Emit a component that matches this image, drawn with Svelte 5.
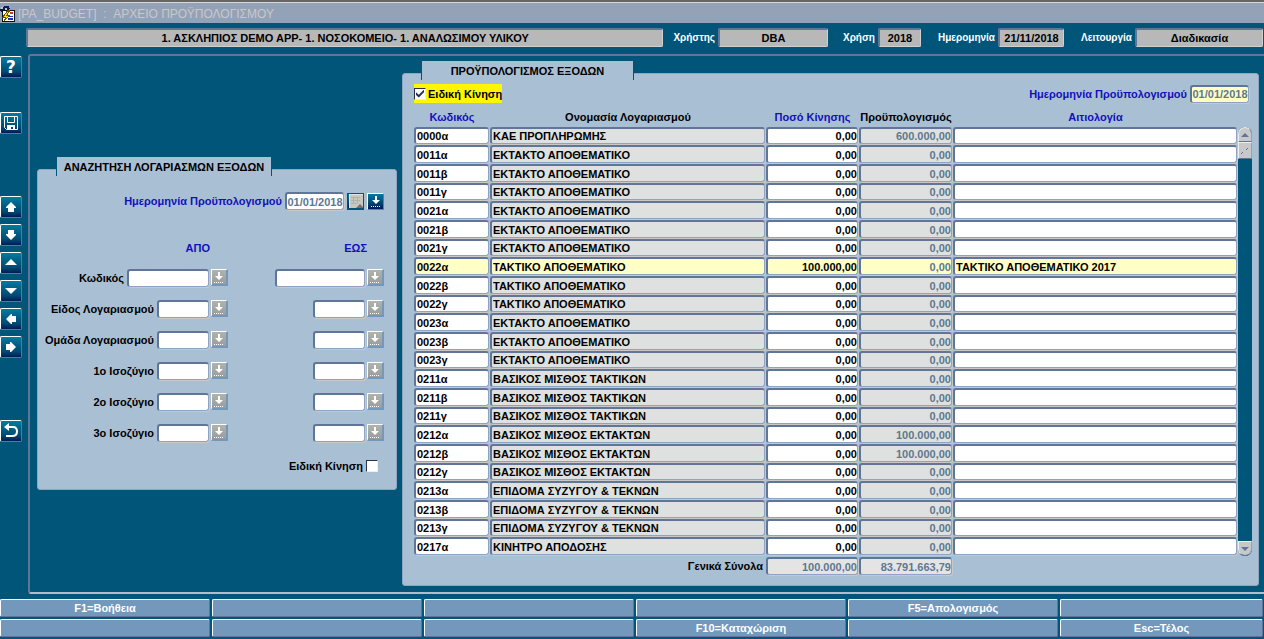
<script lang="ts">
	interface Row {
		code: string;
		name: string;
		amount: string;
		budget: string;
		reason: string;
	}

	function row(code: string, name: string, amount = "0,00", budget = "0,00", reason = ""): Row {
		return { code, name, amount, budget, reason };
	}

	let rows: Row[] = $state([
		row("0000α", "ΚΑΕ ΠΡΟΠΛΗΡΩΜΗΣ", "0,00", "600.000,00"),
		row("0011α", "ΕΚΤΑΚΤΟ ΑΠΟΘΕΜΑΤΙΚΟ"),
		row("0011β", "ΕΚΤΑΚΤΟ ΑΠΟΘΕΜΑΤΙΚΟ"),
		row("0011γ", "ΕΚΤΑΚΤΟ ΑΠΟΘΕΜΑΤΙΚΟ"),
		row("0021α", "ΕΚΤΑΚΤΟ ΑΠΟΘΕΜΑΤΙΚΟ"),
		row("0021β", "ΕΚΤΑΚΤΟ ΑΠΟΘΕΜΑΤΙΚΟ"),
		row("0021γ", "ΕΚΤΑΚΤΟ ΑΠΟΘΕΜΑΤΙΚΟ"),
		row("0022α", "ΤΑΚΤΙΚΟ ΑΠΟΘΕΜΑΤΙΚΟ", "100.000,00", "0,00", "ΤΑΚΤΙΚΟ ΑΠΟΘΕΜΑΤΙΚΟ 2017"),
		row("0022β", "ΤΑΚΤΙΚΟ ΑΠΟΘΕΜΑΤΙΚΟ"),
		row("0022γ", "ΤΑΚΤΙΚΟ ΑΠΟΘΕΜΑΤΙΚΟ"),
		row("0023α", "ΕΚΤΑΚΤΟ ΑΠΟΘΕΜΑΤΙΚΟ"),
		row("0023β", "ΕΚΤΑΚΤΟ ΑΠΟΘΕΜΑΤΙΚΟ"),
		row("0023γ", "ΕΚΤΑΚΤΟ ΑΠΟΘΕΜΑΤΙΚΟ"),
		row("0211α", "ΒΑΣΙΚΟΣ ΜΙΣΘΟΣ ΤΑΚΤΙΚΩΝ"),
		row("0211β", "ΒΑΣΙΚΟΣ ΜΙΣΘΟΣ ΤΑΚΤΙΚΩΝ"),
		row("0211γ", "ΒΑΣΙΚΟΣ ΜΙΣΘΟΣ ΤΑΚΤΙΚΩΝ"),
		row("0212α", "ΒΑΣΙΚΟΣ ΜΙΣΘΟΣ ΕΚΤΑΚΤΩΝ", "0,00", "100.000,00"),
		row("0212β", "ΒΑΣΙΚΟΣ ΜΙΣΘΟΣ ΕΚΤΑΚΤΩΝ", "0,00", "100.000,00"),
		row("0212γ", "ΒΑΣΙΚΟΣ ΜΙΣΘΟΣ ΕΚΤΑΚΤΩΝ"),
		row("0213α", "ΕΠΙΔΟΜΑ ΣΥΖΥΓΟΥ & ΤΕΚΝΩΝ"),
		row("0213β", "ΕΠΙΔΟΜΑ ΣΥΖΥΓΟΥ & ΤΕΚΝΩΝ"),
		row("0213γ", "ΕΠΙΔΟΜΑ ΣΥΖΥΓΟΥ & ΤΕΚΝΩΝ"),
		row("0217α", "ΚΙΝΗΤΡΟ ΑΠΟΔΟΣΗΣ"),
	]);

	let selected = $state("0022α");
	let special = $state(true);
	let searchSpecial = $state(false);

	const filters = [
		{ id: "code", label: "Κωδικός", wide: true },
		{ id: "kind", label: "Είδος Λογαριασμού", wide: false },
		{ id: "group", label: "Ομάδα Λογαριασμού", wide: false },
		{ id: "bal1", label: "1ο Ισοζύγιο", wide: false },
		{ id: "bal2", label: "2ο Ισοζύγιο", wide: false },
		{ id: "bal3", label: "3ο Ισοζύγιο", wide: false },
	];

	const tools = [
		{ id: "save", label: "Αποθήκευση", group: "near" },
		{ id: "up", label: "Προηγούμενο μπλοκ", group: "far" },
		{ id: "down", label: "Επόμενο μπλοκ", group: "" },
		{ id: "prev", label: "Προηγούμενη εγγραφή", group: "" },
		{ id: "next", label: "Επόμενη εγγραφή", group: "" },
		{ id: "left", label: "Προηγούμενο πεδίο", group: "" },
		{ id: "right", label: "Επόμενο πεδίο", group: "" },
		{ id: "back", label: "Επιστροφή", group: "far" },
	];

	const shapes: Record<string, string> = {
		up: "M8 3L13 8V9H11V13H5V9H3V8Z",
		down: "M8 13L13 8V7H11V3H5V7H3V8Z",
		prev: "M8 4L14 10H2Z",
		next: "M8 11L14 5H2Z",
		left: "M3 8L8 3H9V5H13V11H9V13H8Z",
		right: "M13 8L8 3H7V5H3V11H7V13H8Z",
	};

	const keys = [
		"F1=Βοήθεια", "", "", "", "F5=Απολογισμός", "",
		"", "", "", "F10=Καταχώριση", "", "Esc=Τέλος",
	];
</script>

{#snippet lov(label: string, disabled: boolean)}
	<button class="lov" aria-label={label} {disabled}>
		<svg viewBox="0 0 14 14" width="14" height="14">
			<path d="M6 2H8V6H11L7 10L3 6H6Z" fill="#fff" />
			<path d="M2 12.5H12" stroke="#fff" stroke-dasharray="1 1" />
		</svg>
	</button>
{/snippet}

<header class="titlebar">
	<svg class="app-icon" viewBox="0 0 16 16" width="16" height="16" shape-rendering="crispEdges">
		<path d="M0 3L3 1L5 0H9L10 3L8 4H3L1 6Z" fill="#111a55" />
		<path d="M1 1H3V3H1ZM5 2H7V4H5Z" fill="#b8c4dc" />
		<rect x="2" y="4" width="13" height="12" fill="#111" />
		<rect x="3" y="5" width="11" height="10" fill="#fff" />
		<path d="M8 4L3 11H6L4 15L10 9H7L10 4Z" fill="#ffe600" stroke="#665500" stroke-width="1" />
		<rect x="10" y="6" width="3" height="2" fill="#cc3322" />
		<path d="M9 10H13V11H9ZM8 12H13V14H8Z" fill="#2233bb" />
	</svg>
	<h1>[PA_BUDGET] &nbsp;: &nbsp;ΑΡΧΕΙΟ ΠΡΟΫΠΟΛΟΓΙΣΜΟΥ</h1>
</header>

<div class="status">
	<output class="info company">1. ΑΣΚΛΗΠΙΟΣ DEMO APP- 1. ΝΟΣΟΚΟΜΕΙΟ- 1. ΑΝΑΛΩΣΙΜΟΥ ΥΛΙΚΟΥ</output>
	<label for="user">Χρήστης</label>
	<output class="info user" id="user">DBA</output>
	<label for="year">Χρήση</label>
	<output class="info year" id="year">2018</output>
	<label for="today">Ημερομηνία</label>
	<output class="info today" id="today">21/11/2018</output>
	<label for="mode">Λειτουργία</label>
	<output class="info mode" id="mode">Διαδικασία</output>
</div>

<div class="workspace">
	<nav class="toolbar">
		<button class="tool" aria-label="Βοήθεια"><span class="question">?</span></button>
		{#each tools as tool}
			<button class="tool {tool.group}" aria-label={tool.label}>
				<svg viewBox="0 0 16 16" width="16" height="16">
					{#if tool.id === "save"}
						<path d="M1.5 1.5H14.5V14.5H3.5L1.5 12.5Z" fill="none" stroke="#fff" />
						<path d="M4.5 1.5V7.5H11.5V1.5" fill="none" stroke="#fff" />
						<path d="M4 10H12V15H10V12H8V15H4Z" fill="#fff" />
					{:else if tool.id === "back"}
						<path d="M4 4H10Q14 4 14 8.5Q14 13 9 13H3" fill="none" stroke="#fff" stroke-width="2" />
						<path d="M1 4L6 0V8Z" fill="#fff" />
					{:else}
						<path d={shapes[tool.id]} fill="#fff" />
					{/if}
				</svg>
			</button>
		{/each}
	</nav>

	<main class="frame">
		<section class="panel search">
			<h2 class="tab">ΑΝΑΖΗΤΗΣΗ ΛΟΓΑΡΙΑΣΜΩΝ ΕΞΟΔΩΝ</h2>
			<div class="search-date">
				<label class="blue" for="search-date">Ημερομηνία Προϋπολογισμού</label>
				<input class="field date" id="search-date" value="01/01/2018" />
				<button class="lov calendar" aria-label="Ημερολόγιο">
					<svg viewBox="0 0 14 14" width="14" height="14">
						<rect width="14" height="14" fill="#c8c8c2" />
						<path d="M2 3.5H11M2 6.5H11M2 9.5H8M4.5 3V10M8.5 3V9" stroke="#b2b2ac" />
						<path d="M7 14L11 10L14 13V14Z" fill="#7b6f68" />
						<path d="M0 14V0H14" fill="none" stroke="#fff" />
					</svg>
				</button>
				{@render lov("Λίστα ημερομηνιών", false)}
			</div>
			<div class="range-heads blue">
				<span class="head-from">ΑΠΟ</span>
				<span class="head-to">ΕΩΣ</span>
			</div>
			{#each filters as filter}
				<div class="range" class:wide={filter.wide}>
					<div class="bound from">
						<label for="{filter.id}-from">{filter.label}</label>
						<input class="field" id="{filter.id}-from" />
						{@render lov(filter.label + " από, λίστα", true)}
					</div>
					<div class="bound to">
						<input class="field" aria-label="{filter.label} έως" />
						{@render lov(filter.label + " έως, λίστα", true)}
					</div>
				</div>
			{/each}
			<label class="search-special">
				Ειδική Κίνηση
				<input class="check" type="checkbox" bind:checked={searchSpecial} />
			</label>
		</section>

		<section class="panel budget">
			<h2 class="tab">ΠΡΟΫΠΟΛΟΓΙΣΜΟΣ ΕΞΟΔΩΝ</h2>
			<div class="budget-top">
				<label class="special">
					<input class="check" type="checkbox" bind:checked={special} />
					Ειδική Κίνηση
				</label>
				<div class="budget-date">
					<label class="blue" for="budget-date">Ημερομηνία Προϋπολογισμού</label>
					<input class="field date current" id="budget-date" value="01/01/2018" />
				</div>
			</div>
			<div class="grid">
				<table>
					<colgroup>
						<col class="col-code" />
						<col class="col-name" />
						<col class="col-amount" />
						<col class="col-budget" />
						<col />
					</colgroup>
					<thead>
						<tr>
							<th class="blue">Κωδικός</th>
							<th>Ονομασία Λογαριασμού</th>
							<th class="blue">Ποσό Κίνησης</th>
							<th>Προϋπολογισμός</th>
							<th class="blue">Αιτιολογία</th>
						</tr>
					</thead>
					<tbody>
						{#each rows as r}
							<tr class:selected={r.code === selected} onfocusin={() => (selected = r.code)}>
								<td><input class="field" aria-label="Κωδικός" bind:value={r.code} readonly /></td>
								<td><input class="field locked" aria-label="Ονομασία" value={r.name} readonly /></td>
								<td><input class="field number" aria-label="Ποσό Κίνησης" bind:value={r.amount} /></td>
								<td><input class="field locked number dim" aria-label="Προϋπολογισμός" value={r.budget} readonly /></td>
								<td><input class="field" aria-label="Αιτιολογία" bind:value={r.reason} /></td>
							</tr>
						{/each}
					</tbody>
					<tfoot>
						<tr>
							<th class="total-label" colspan="2">Γενικά Σύνολα</th>
							<td><input class="field total number dim" aria-label="Σύνολο κίνησης" value="100.000,00" readonly /></td>
							<td><input class="field total number dim" aria-label="Σύνολο προϋπολογισμού" value="83.791.663,79" readonly /></td>
							<td></td>
						</tr>
					</tfoot>
				</table>
				<div class="scrollbar">
					<button class="scroll-up" aria-label="Πάνω">
						<svg viewBox="0 0 8 4" width="8" height="4"><path d="M4 0L8 4H0Z" fill="#5f7699" /></svg>
					</button>
					<div class="thumb">
						<svg viewBox="0 0 8 6" width="8" height="6"><path d="M0 6L2 4M5 2L7 0" stroke="#5f7699" /></svg>
					</div>
					<button class="scroll-down" aria-label="Κάτω">
						<svg viewBox="0 0 8 4" width="8" height="4"><path d="M4 4L8 0H0Z" fill="#5f7699" /></svg>
					</button>
				</div>
			</div>
		</section>
	</main>
</div>

<footer class="keys">
	{#each keys as key}
		<button class="key" aria-label={key || "Κενό πλήκτρο"}>{key}</button>
	{/each}
</footer>

<style>
	:global(body) {
		background: #005579;
		color: #000;
		font: bold 11px/14px "Liberation Sans", Arial, sans-serif;
	}

	:global(#app) {
		overflow: hidden;
	}

	button,
	input {
		box-sizing: border-box;
		margin: 0;
		padding: 0;
		font: inherit;
	}

	svg {
		display: block;
	}

	.titlebar {
		display: flex;
		align-items: center;
		height: 21px;
		border-top: 2px solid #666;
		background: #94a2b8;
		box-shadow: inset 0 1px #d8d8d8;
	}

	.titlebar h1 {
		margin: 0 0 0 2px;
		padding-top: 2px;
		color: #c8c8c8;
		font-size: 12px;
		font-weight: normal;
	}

	.app-icon {
		margin-top: 3px;
	}

	.status {
		display: flex;
		align-items: center;
		margin-top: 5px;
		padding: 0 1px 0 26px;
		color: #fff;
	}

	.status label {
		margin: 0 3px 0 10px;
		font-size: 10px;
	}

	.info {
		box-sizing: border-box;
		height: 19px;
		border: solid #5f7699;
		border-width: 2px 1px 1px 2px;
		border-right-color: #d0d0d0;
		border-bottom-color: #d0d0d0;
		border-radius: 2px;
		background: #b8b8b8;
		color: #000;
		line-height: 16px;
		text-align: center;
	}

	.company {
		flex: 1;
	}

	.user {
		width: 110px;
		margin-right: 5px;
	}

	.year {
		width: 43px;
		margin-right: 7px;
	}

	.today {
		width: 66px;
		margin-right: 7px;
	}

	.mode {
		width: 128px;
	}

	.workspace {
		display: flex;
		margin-top: 7px;
	}

	.toolbar {
		display: flex;
		flex-direction: column;
		gap: 6px;
		width: 28px;
		padding-top: 2px;
	}

	.tool {
		display: flex;
		align-items: center;
		justify-content: center;
		width: 22px;
		height: 22px;
		border: 1px solid #fff;
		border-right-color: #5f7699;
		border-bottom-color: #5f7699;
		border-radius: 2px;
		background: linear-gradient(#007c9e, #00476f 75%, #00195c);
	}

	.tool.near {
		margin-top: 28px;
	}

	.tool.far {
		margin-top: 56px;
	}

	.question {
		color: #fff;
		font: bold 17px/18px "DejaVu Sans", sans-serif;
	}

	.frame {
		display: flex;
		align-items: flex-start;
		justify-content: space-between;
		flex: 1;
		min-width: 0;
		padding: 17px 5px 6px 7px;
		border: solid #5f7699;
		border-width: 2px 0 0 2px;
		border-bottom: 2px solid #b4bccb;
		border-radius: 3px 0 0 3px;
	}

	.panel {
		box-sizing: border-box;
		border: 1px solid #8fa6c0;
		border-radius: 3px;
		background: #a9bfd4;
	}

	.tab {
		box-sizing: border-box;
		height: 19px;
		margin: -13px 0 0 18px;
		border: solid #005579;
		border-width: 0 1px;
		background: #a9bfd4;
		font-size: 11px;
		line-height: 21px;
		text-align: center;
	}

	.blue {
		color: #1111bb;
	}

	.search {
		width: 360px;
		margin-top: 96px;
		padding-bottom: 13px;
	}

	.search .tab {
		width: 216px;
	}

	.field {
		display: block;
		height: 18px;
		padding-left: 1px;
		border: solid #5f7699;
		border-width: 2px 1px 1px 2px;
		border-right-color: #8fa3c0;
		border-bottom-color: #8fa3c0;
		border-radius: 3px;
		background: #fff;
		box-shadow: 1px 1px #c8c8c8;
		color: #000;
		outline: none;
	}

	.date {
		width: 59px;
		padding-left: 0;
		color: #5d7890;
		text-align: center;
	}

	.date.current {
		background: #ffffc6;
	}

	.search-date {
		display: flex;
		align-items: center;
		justify-content: flex-end;
		gap: 3px;
		height: 20px;
		padding: 15px 12px 0 0;
	}

	.lov {
		display: flex;
		align-items: center;
		justify-content: center;
		width: 17px;
		height: 17px;
		border: 1px solid #fff;
		border-right-color: #5f7fa5;
		border-bottom-color: #5f7fa5;
		background: linear-gradient(#007c9e, #00476f 60%, #00195c);
	}

	.lov:disabled {
		background: linear-gradient(#b0b4ac, #999c9c);
		border-right: 2px solid #7398bc;
		border-bottom: 2px solid #7398bc;
	}

	.lov.calendar {
		border: 1px solid #005579;
		border-bottom-width: 2px;
	}

	.range-heads {
		display: flex;
		margin-top: 27px;
		line-height: 20px;
	}

	.head-from {
		width: 190px;
		box-sizing: border-box;
		padding-right: 18px;
		text-align: right;
	}

	.head-to {
		width: 156px;
		box-sizing: border-box;
		padding-right: 17px;
		text-align: right;
	}

	.range-heads + .range {
		margin-top: 4px;
	}

	.range {
		display: flex;
		height: 31px;
	}

	.bound {
		display: flex;
		align-items: center;
		justify-content: flex-end;
		gap: 2px;
	}

	.from {
		width: 190px;
	}

	.to {
		width: 156px;
	}

	.bound .field {
		width: 52px;
	}

	.bound label {
		margin-right: 1px;
		white-space: nowrap;
	}

	.wide .from .field {
		width: 82px;
	}

	.wide .to .field {
		width: 90px;
	}

	.search-special {
		display: flex;
		align-items: center;
		justify-content: flex-end;
		gap: 3px;
		height: 20px;
		margin-top: 8px;
		padding-right: 18px;
	}

	.check {
		display: grid;
		place-items: center;
		width: 12px;
		height: 12px;
		border: 1px solid #28324f;
		border-right-color: #eee;
		border-bottom-color: #eee;
		background: #fff;
		appearance: none;
	}

	.check:checked::after {
		content: "";
		width: 8px;
		height: 8px;
		background: #28324f;
		clip-path: polygon(0 35%, 35% 65%, 100% 0, 100% 35%, 35% 100%, 0 70%);
	}

	.budget {
		width: 857px;
		padding: 0 6px 9px 11px;
	}

	.budget .tab {
		width: 213px;
		margin-left: 7px;
	}

	.budget-top {
		display: flex;
		align-items: center;
		justify-content: space-between;
		margin-top: 4px;
		padding-right: 3px;
	}

	.special {
		display: flex;
		align-items: center;
		gap: 2px;
		height: 19px;
		background: #fff600;
	}

	.budget-date {
		display: flex;
		align-items: center;
		gap: 3px;
	}

	.grid {
		display: flex;
		margin-top: 4px;
	}

	table {
		flex: 1;
		min-width: 0;
		border-spacing: 0;
		table-layout: fixed;
	}

	.col-code {
		width: 76px;
	}

	.col-name {
		width: 276px;
	}

	.col-amount {
		width: 93px;
	}

	.col-budget {
		width: 94px;
	}

	th {
		height: 20px;
		padding: 0;
		white-space: nowrap;
	}

	td {
		height: 19px;
		padding: 0 1px 0 0;
		vertical-align: top;
	}

	tbody tr:nth-child(3n + 1) td {
		height: 18px;
	}

	tbody tr:nth-child(3n + 1) .field {
		height: 17px;
	}

	td .field {
		width: 100%;
	}

	.locked {
		background: #dee1df;
	}

	.total {
		background: #e4e4e4;
	}

	.number {
		text-align: right;
	}

	.dim {
		color: #5d7890;
	}

	.selected .field {
		background: #ffffc6;
	}

	.total-label {
		padding-right: 3px;
		text-align: right;
	}

	tfoot td {
		vertical-align: middle;
	}

	.scrollbar {
		display: flex;
		flex-direction: column;
		width: 14px;
		margin: 20px 0;
		border-radius: 7px;
		background: #005579;
	}

	.scroll-up,
	.scroll-down,
	.thumb {
		display: flex;
		align-items: center;
		justify-content: center;
		height: 15px;
		border: 1px solid #eee;
		border-right-color: #8fa3c0;
		border-bottom-color: #5f7699;
		background: #c8c8c8;
	}

	.scroll-up {
		border-radius: 7px 7px 0 0;
	}

	.scroll-down {
		margin-top: auto;
		border-radius: 0 0 7px 7px;
	}

	.keys {
		display: grid;
		grid-template-columns: repeat(5, 210fr) 203fr;
		gap: 2px;
		margin-top: 5px;
		padding: 0 1px 2px 0;
	}

	.key {
		height: 18px;
		border: 1px solid #fff;
		border-right-color: #5f7699;
		border-bottom-color: #5f7699;
		border-radius: 2px;
		background: #7398bc;
		color: #fff;
	}
</style>
